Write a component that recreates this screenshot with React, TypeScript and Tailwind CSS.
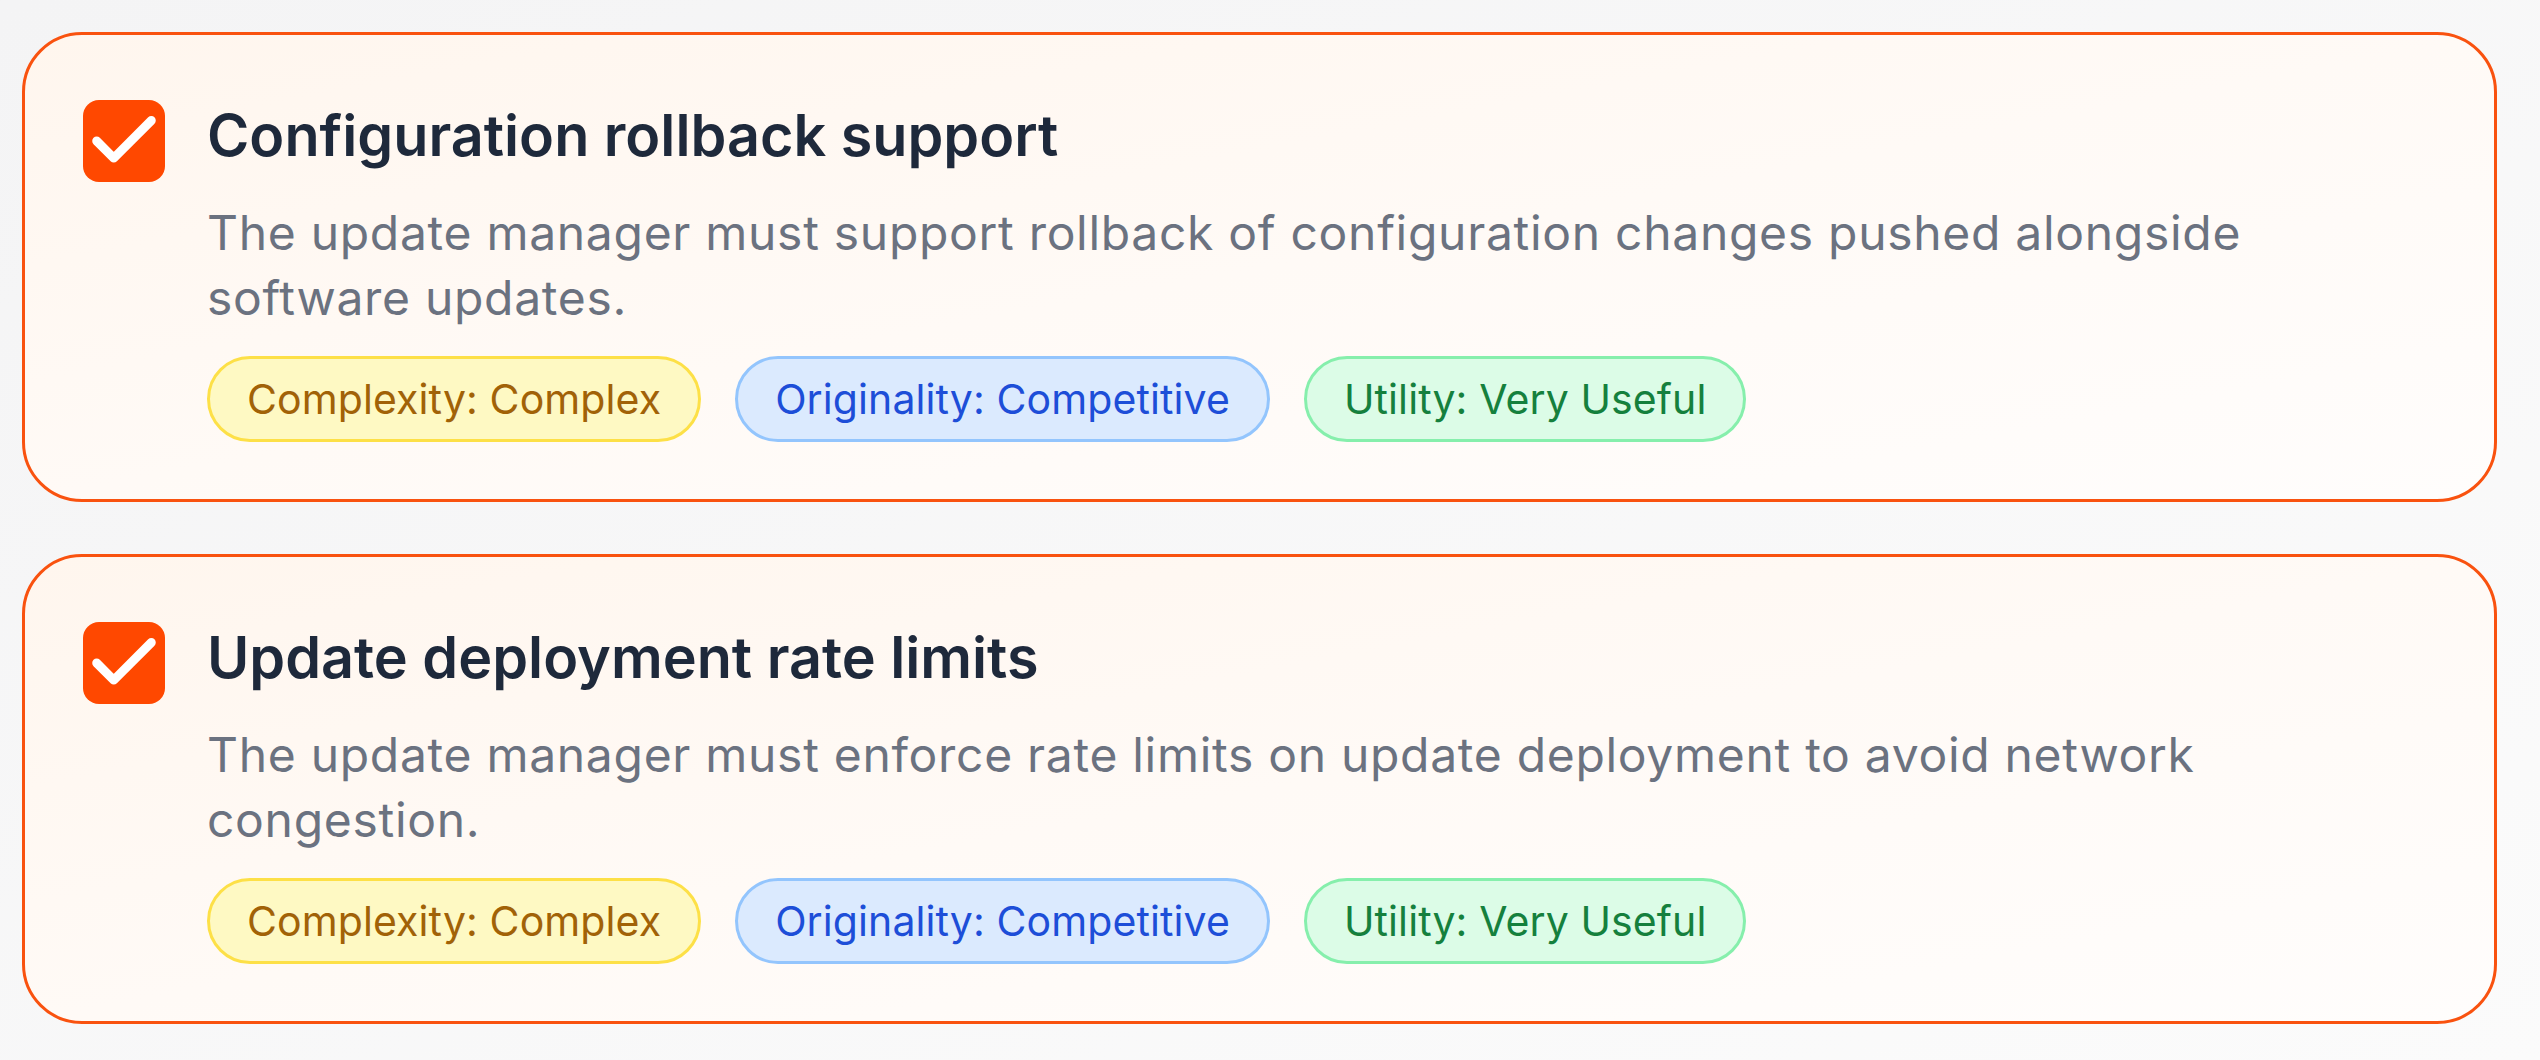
import React from 'react';
import { Check } from 'lucide-react';

type Requirement = {
  id: number;
  title: string;
  description: string;
  complexity: string;
  originality: string;
  utility: string;
};

const REQUIREMENTS: Requirement[] = [
  {
    id: 1,
    title: 'Configuration rollback support',
    description:
      'The update manager must support rollback of configuration changes pushed alongside software updates.',
    complexity: 'Complex',
    originality: 'Competitive',
    utility: 'Very Useful',
  },
  {
    id: 2,
    title: 'Update deployment rate limits',
    description:
      'The update manager must enforce rate limits on update deployment to avoid network congestion.',
    complexity: 'Complex',
    originality: 'Competitive',
    utility: 'Very Useful',
  },
];

const Badge: React.FC<{ className: string; children: React.ReactNode }> = ({ className, children }) => (
  <span
    className={`inline-flex h-[86px] items-center rounded-full border-[3px] px-[37px] text-[41px] leading-none tracking-[0.1px] ${className}`}
  >
    {children}
  </span>
);

const RequirementCard: React.FC<{ item: Requirement }> = ({ item }) => (
  <div className="rounded-[60px] border-[3px] border-[#f9520f] bg-gradient-to-br from-[#fff6ee] via-[#fffaf6] to-[#fffdfc] pt-[65px] pb-[57px] pl-[58px] pr-[58px]">
    <div className="flex items-start gap-[42px]">
      <div className="flex h-[82px] w-[82px] shrink-0 items-center justify-center rounded-[16px] bg-[#ff4800]">
        <Check className="h-[82px] w-[82px] text-white" strokeWidth={2.6} />
      </div>
      <div className="min-w-0 flex-1 pr-[100px]">
        <h3 className="text-[57.5px] font-semibold leading-[70px] text-[#1e293b]">{item.title}</h3>
        <p className="mt-[30px] text-[48px] leading-[65px] tracking-[0.7px] text-[#6b7280]">{item.description}</p>
        <div className="mt-[26px] flex flex-wrap gap-[34px]">
          <Badge className="border-[#fde047] bg-[#fef9c3] text-[#a16207]">Complexity: {item.complexity}</Badge>
          <Badge className="border-[#93c5fd] bg-[#dbeafe] text-[#1d4ed8]">Originality: {item.originality}</Badge>
          <Badge className="border-[#86efac] bg-[#dcfce7] text-[#15803d]">Utility: {item.utility}</Badge>
        </div>
      </div>
    </div>
  </div>
);

const App: React.FC = () => {
  return (
    <div
      className="min-h-screen bg-gradient-to-br from-[#f4f4f5] to-[#fbfbfb] pt-[32px] pb-[35px] pl-[22px] pr-[43px]"
      style={{ fontFamily: 'Inter, "Noto Sans", sans-serif' }}
    >
      <div className="flex flex-col gap-[52px]">
        {REQUIREMENTS.map((req) => (
          <RequirementCard key={req.id} item={req} />
        ))}
      </div>
    </div>
  );
};

export default App;
